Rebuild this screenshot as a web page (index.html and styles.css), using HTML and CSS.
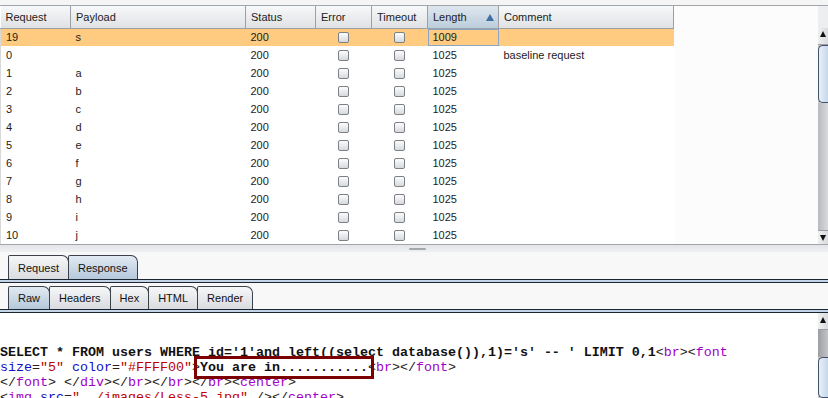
FILE: index.html
```html
<!DOCTYPE html>
<html lang="en">
<head>
    <meta charset="UTF-8">
    <title>Intruder results</title>
    <link rel="stylesheet" href="styles.css">
</head>
<body>

<div class="top-strip"></div>

<div class="results">
    <div class="grid-area">
        <table class="grid">
            <colgroup>
                <col class="w70"><col class="w175"><col class="w70">
                <col class="w56"><col class="w56"><col class="w71"><col class="w175">
            </colgroup>
            <thead>
                <tr>
                    <th>Request</th>
                    <th>Payload</th>
                    <th>Status</th>
                    <th>Error</th>
                    <th>Timeout</th>
                    <th class="sorted">Length <span class="sort-arrow"></span></th>
                    <th>Comment</th>
                </tr>
            </thead>
            <tbody>
                <tr class="selected"><td>19</td><td>s</td><td>200</td><td class="c"><span class="cb"></span></td><td class="c"><span class="cb"></span></td><td class="focus">1009</td><td></td></tr>
                <tr><td>0</td><td></td><td>200</td><td class="c"><span class="cb"></span></td><td class="c"><span class="cb"></span></td><td>1025</td><td>baseline request</td></tr>
                <tr><td>1</td><td>a</td><td>200</td><td class="c"><span class="cb"></span></td><td class="c"><span class="cb"></span></td><td>1025</td><td></td></tr>
                <tr><td>2</td><td>b</td><td>200</td><td class="c"><span class="cb"></span></td><td class="c"><span class="cb"></span></td><td>1025</td><td></td></tr>
                <tr><td>3</td><td>c</td><td>200</td><td class="c"><span class="cb"></span></td><td class="c"><span class="cb"></span></td><td>1025</td><td></td></tr>
                <tr><td>4</td><td>d</td><td>200</td><td class="c"><span class="cb"></span></td><td class="c"><span class="cb"></span></td><td>1025</td><td></td></tr>
                <tr><td>5</td><td>e</td><td>200</td><td class="c"><span class="cb"></span></td><td class="c"><span class="cb"></span></td><td>1025</td><td></td></tr>
                <tr><td>6</td><td>f</td><td>200</td><td class="c"><span class="cb"></span></td><td class="c"><span class="cb"></span></td><td>1025</td><td></td></tr>
                <tr><td>7</td><td>g</td><td>200</td><td class="c"><span class="cb"></span></td><td class="c"><span class="cb"></span></td><td>1025</td><td></td></tr>
                <tr><td>8</td><td>h</td><td>200</td><td class="c"><span class="cb"></span></td><td class="c"><span class="cb"></span></td><td>1025</td><td></td></tr>
                <tr><td>9</td><td>i</td><td>200</td><td class="c"><span class="cb"></span></td><td class="c"><span class="cb"></span></td><td>1025</td><td></td></tr>
                <tr><td>10</td><td>j</td><td>200</td><td class="c"><span class="cb"></span></td><td class="c"><span class="cb"></span></td><td>1025</td><td></td></tr>
            </tbody>
        </table>
    </div>
    <div class="vscroll">
        <div class="corner"></div>
        <div class="arrow"><svg width="10" height="16" viewBox="0 0 10 16"><polygon points="2,9 5,3 8,9" fill="#111"/></svg></div>
        <div class="thumb"></div>
        <div class="track"></div>
        <div class="arrow down"><svg width="10" height="14" viewBox="0 0 10 14"><polygon points="2,4 8,4 5,10" fill="#111"/></svg></div>
    </div>
</div>

<div class="splitter"><span class="grip"></span></div>

<div class="tabbar outer">
    <div class="tab">Request</div>
    <div class="tab active">Response</div>
</div>
<div class="rule"></div>

<div class="tabbar inner">
    <div class="tab active">Raw</div>
    <div class="tab">Headers</div>
    <div class="tab">Hex</div>
    <div class="tab">HTML</div>
    <div class="tab">Render</div>
</div>
<div class="rule"></div>

<div class="response">
    <div class="code-area">
<pre class="code">SELECT * FROM users WHERE id='1'and left((select database()),1)='s' -- ' LIMIT 0,1<span class="p">&lt;</span><span class="t">br</span><span class="p">&gt;&lt;</span><span class="t">font</span>
<span class="a">size</span><span class="p">=</span><span class="v">"5"</span> <span class="a">color</span><span class="p">=</span><span class="v">"#FFFF00"</span><span class="p">&gt;</span>You are in...........<span class="p">&lt;</span><span class="t">br</span><span class="p">&gt;&lt;/</span><span class="t">font</span><span class="p">&gt;</span>
<span class="p">&lt;/</span><span class="t">font</span><span class="p">&gt; &lt;/</span><span class="t">div</span><span class="p">&gt;&lt;/</span><span class="t">br</span><span class="p">&gt;&lt;/</span><span class="t">br</span><span class="p">&gt;&lt;/</span><span class="t">br</span><span class="p">&gt;&lt;</span><span class="t">center</span><span class="p">&gt;</span>
<span class="p">&lt;</span><span class="t">img</span> <span class="a">src</span><span class="p">=</span><span class="v">"../images/Less-5.jpg"</span><span class="p"> /&gt;&lt;/</span><span class="t">center</span><span class="p">&gt;</span></pre>
        <div class="highlight-box"></div>
    </div>
    <div class="vscroll lower">
        <div class="arrow"><svg width="10" height="16" viewBox="0 0 10 16"><polygon points="2,10 5,4 8,10" fill="#111"/></svg></div>
        <div class="track dark"></div>
        <div class="thumb lower-thumb"></div>
    </div>
</div>

</body>
</html>
```

FILE: styles.css
```css
* {
    box-sizing: border-box;
}

body {
    margin: 0;
    width: 828px;
    height: 398px;
    overflow: hidden;
    background-color: #f8f8f8;
    font-family: "Liberation Sans", Arial, sans-serif;
    font-size: 11px;
    color: #1c1c1c;
}

.top-strip {
    height: 5px;
    background-color: #f5f5f5;
}

.results {
    display: flex;
    height: 240px;
    border-top: 1px solid #a2a5aa;
    border-bottom: 1px solid #a2a5aa;
}

.grid-area {
    flex: 1;
    background-color: #fcfcfc;
}

.grid {
    width: 673px;
    table-layout: fixed;
    border-collapse: collapse;
    background-color: #fff;
}

.w70 { width: 70px; }
.w175 { width: 175px; }
.w56 { width: 56px; }
.w71 { width: 71px; }

.grid th {
    height: 22px;
    padding: 0 0 0 5px;
    text-align: left;
    font-weight: normal;
    color: #222;
    background: linear-gradient(#f7f8f9, #dfe1e4);
    border-right: 1px solid #9ca0a6;
    border-bottom: 1px solid #9ca0a6;
}

.grid th.sorted {
    background: linear-gradient(#dde6ee, #bccddc);
    position: relative;
}

.sort-arrow {
    position: absolute;
    right: 4px;
    top: 8px;
    width: 0;
    height: 0;
    border-left: 4px solid transparent;
    border-right: 4px solid transparent;
    border-bottom: 7px solid #3f6fa5;
}

.grid td {
    height: 18px;
    padding: 0 0 0 5px;
    white-space: nowrap;
    overflow: hidden;
}

.grid td:first-child {
    border-left: 1px solid #d8d8d8;
}

.grid td.c {
    padding: 0;
    text-align: center;
}

.grid tr.selected td {
    background-color: #fecb80;
}

.grid tr.selected td.focus {
    box-shadow: inset 0 0 0 1px #8aa6c4;
}

.cb {
    display: inline-block;
    width: 11px;
    height: 11px;
    margin-top: 3px;
    border: 1px solid #7c8087;
    border-radius: 2px;
    background: linear-gradient(#fdfdfd, #d6d8db);
}

.vscroll {
    width: 10px;
    display: flex;
    flex-direction: column;
    background-color: #c5c7ca;
}

.vscroll .corner {
    height: 22px;
    background-color: #eceef0;
}

.vscroll .arrow {
    height: 17px;
    background: linear-gradient(90deg, #f0f0f0, #d8dadd);
    border-bottom: 1px solid #9a9da2;
}

.vscroll .arrow.down {
    height: 14px;
    border-bottom: none;
    border-top: 1px solid #9a9da2;
}

.vscroll .arrow svg {
    display: block;
}

.vscroll .thumb {
    height: 58px;
    background: linear-gradient(90deg, #e8f0f8, #c6d8ea);
    border: 1px solid #42506a;
    border-right: none;
    border-radius: 5px 0 0 5px;
}

.vscroll .track {
    flex: 1;
    background: linear-gradient(90deg, #b8babe, #d8dadd);
}

.splitter {
    height: 7px;
    display: flex;
    justify-content: center;
    align-items: center;
    padding-left: 6px;
    background: linear-gradient(#e2e4e8, #eef0f2);
}

.grip {
    width: 17px;
    height: 2px;
    border-radius: 1px;
    background-color: #a4a8ae;
}

.tabbar {
    display: flex;
    align-items: flex-end;
    padding-left: 8px;
    background-color: #f8f8f8;
}

.tabbar.outer {
    height: 27px;
}

.tabbar.inner {
    height: 26px;
}

.tab {
    padding: 0 9px;
    border: 1px solid #3c424c;
    border-bottom: none;
    border-radius: 2px 7px 0 0;
    background: linear-gradient(#f6f7f8, #d9dbdf);
    color: #111;
    font-size: 11px;
    display: flex;
    align-items: center;
}

.tab + .tab {
    margin-left: -1px;
}

.outer .tab {
    height: 24px;
}

.inner .tab {
    height: 23px;
}

.tab.active {
    background: linear-gradient(#e2eaf2, #b4c8dc);
}

.rule {
    height: 4px;
    border-top: 1px solid #1c2633;
    border-bottom: 1px solid #1c2633;
    background-color: #c3d4e6;
}

.response {
    display: flex;
    height: 85px;
    background-color: #fff;
}

.code-area {
    flex: 1;
    position: relative;
}

.code {
    margin: 0;
    padding: 32px 0 0 0;
    font-family: "Liberation Mono", "Courier New", monospace;
    font-size: 13.333px;
    line-height: 15px;
    font-weight: bold;
    color: #111;
    white-space: pre;
}

.code .p {
    font-weight: normal;
    color: #222;
}

.code .t {
    font-weight: normal;
    color: #a000c8;
}

.code .a {
    font-weight: normal;
    color: #1010c8;
}

.code .v {
    font-weight: normal;
    color: #c00000;
}

.highlight-box {
    position: absolute;
    left: 194px;
    top: 43px;
    width: 180px;
    height: 23px;
    border: 3px solid #7c0000;
}

.vscroll.lower .arrow {
    height: 17px;
}

.vscroll .track.dark {
    flex: none;
    height: 27px;
    background: linear-gradient(90deg, #9c9ea2, #c2c4c8);
}

.vscroll .lower-thumb {
    flex: 1;
    height: auto;
}
```
